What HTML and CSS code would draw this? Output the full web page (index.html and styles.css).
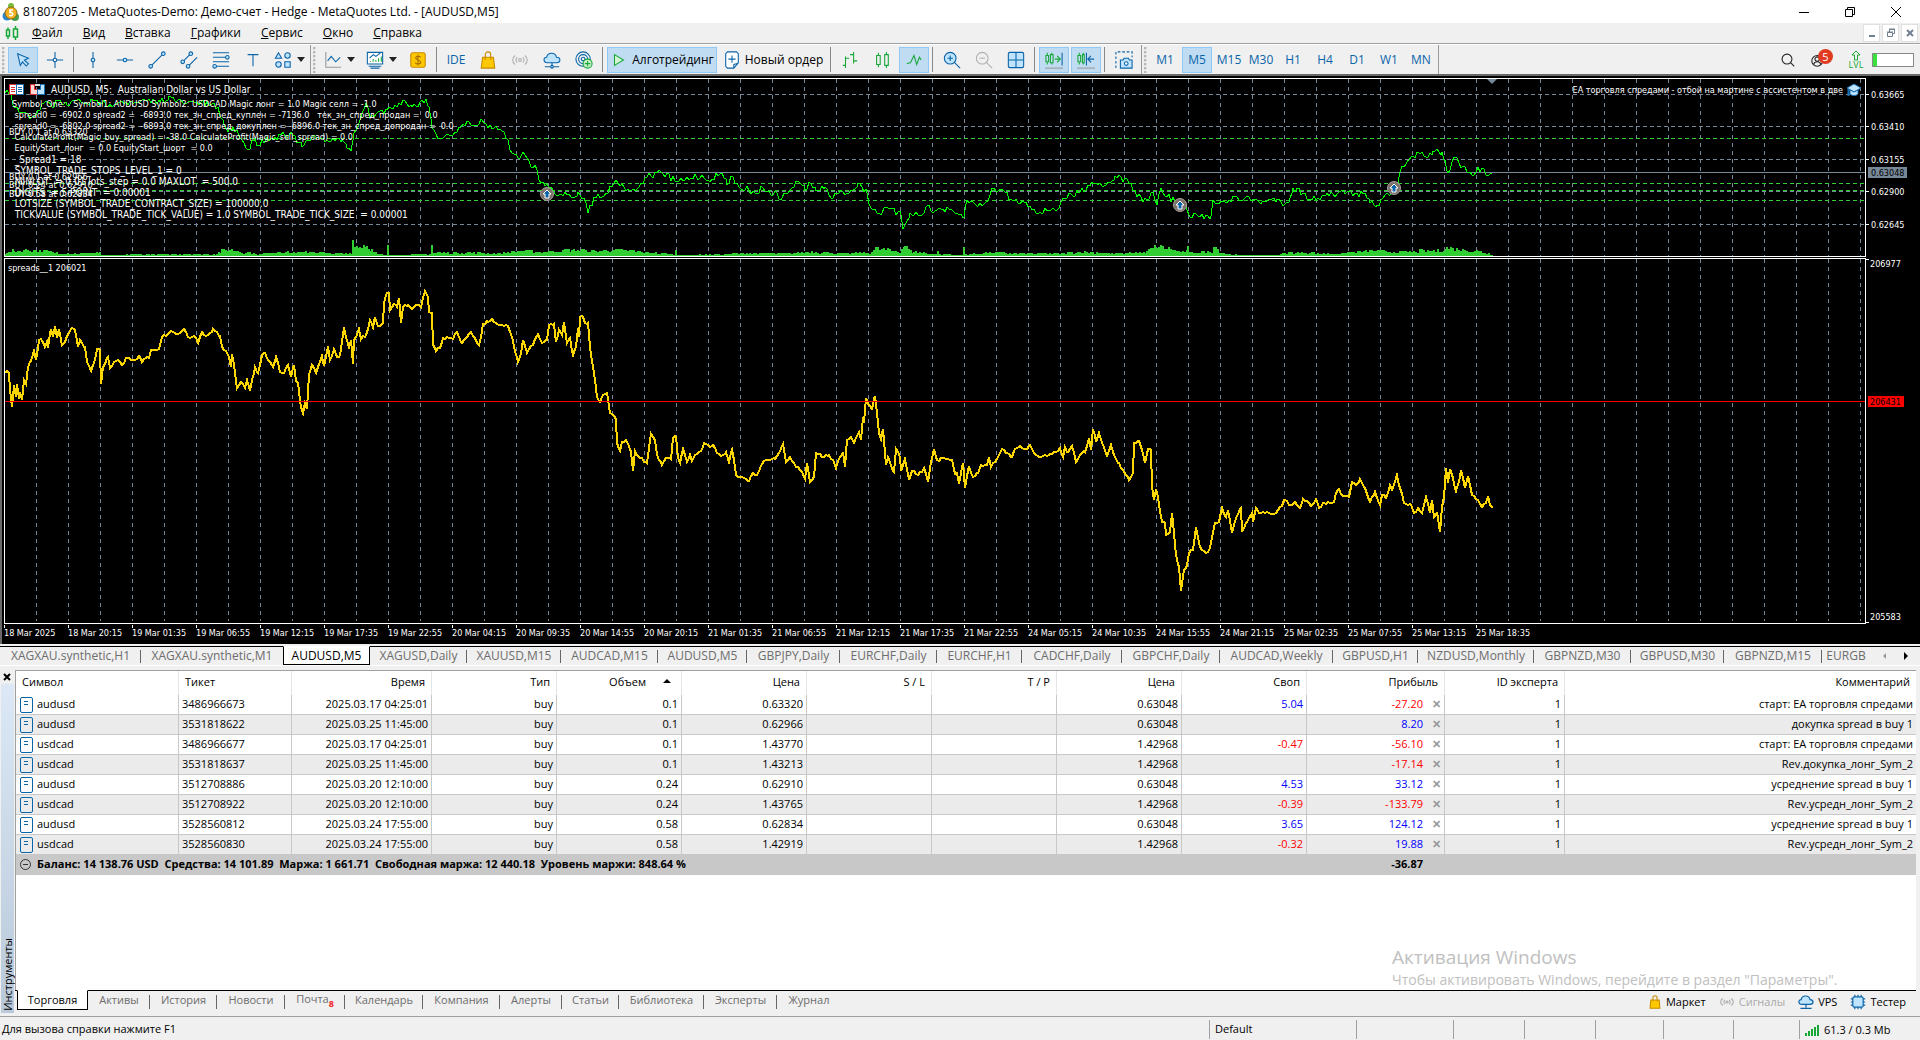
FILE: index.html
```html
<!DOCTYPE html>
<html lang="ru">
<head>
<meta charset="utf-8">
<title>81807205 - MetaQuotes-Demo</title>
<link rel="stylesheet" href="styles.css">
</head>
<body>
<header class="titlebar">
  <svg class="logo" width="18" height="20" viewBox="0 0 18 20"><path d="M9 1l3 4H6z" fill="#3a9a3a"/><circle cx="9" cy="4" r="3" fill="#7dbb3c"/><circle cx="5" cy="14" r="4.500" fill="#2d87c8"/><circle cx="13" cy="15" r="4" fill="#4aa04a"/><circle cx="9" cy="11" r="6" fill="#f2b01e" stroke="#8a6a1a"/><path d="M11 8H8v2.500c3-.8 4 3 .8 3.200L7 13.200" fill="none" stroke="#fff" stroke-width="1.600"/></svg>
  <h1>81807205 - MetaQuotes-Demo: Демо-счет - Hedge - MetaQuotes Ltd. - [AUDUSD,M5]</h1>
  <div class="winctl">
    <button aria-label="Свернуть"><svg width="12" height="12"><path d="M1 6.500h10" stroke="#000"/></svg></button>
    <button aria-label="Восстановить"><svg width="12" height="12" fill="none" stroke="#000"><path d="M1.500 3.500h7v7h-7zM3.500 3.500v-2h7v7h-2"/></svg></button>
    <button aria-label="Закрыть"><svg width="12" height="12"><path d="M1 1l10 10M11 1L1 11" stroke="#000"/></svg></button>
  </div>
</header>

<nav class="menubar">
  <svg width="16" height="16" viewBox="0 0 16 16" fill="none" stroke="#18a838" stroke-width="1.500"><path d="M1.500 5h3v6h-3zM3 2.500V5M3 11v3M8.500 4h4v8h-4zM10.500 1v3M10.500 12v3"/></svg>
  <button><u>Ф</u>айл</button><button><u>В</u>ид</button><button><u>В</u>ставка</button><button><u>Г</u>рафики</button><button><u>С</u>ервис</button><button><u>О</u>кно</button><button><u>С</u>правка</button>
  <div class="mdictl">
    <button aria-label="Свернуть окно"><svg width="12" height="12"><path d="M3 9h6" stroke="#708090" stroke-width="2"/></svg></button>
    <button aria-label="Восстановить окно"><svg width="12" height="12" fill="none" stroke="#708090"><path d="M2.500 5.500h5v4h-5zM2 5h6M4.500 5V2.500h5v4H8M4 2h6"/></svg></button>
    <button aria-label="Закрыть окно"><svg width="12" height="12"><path d="M3 3l6 6M9 3L3 9" stroke="#708090" stroke-width="2"/></svg></button>
  </div>
</nav>

<div class="toolbar">
  <div class="group">
    <i class="grip"></i>
    <button class="tb on" aria-label="Курсор"><svg viewBox="0 0 20 20"><path d="M4 3l12 5-4.500 2.200 4.500 4-2.500 2.500-4-4.500L7 16z" class="lb"/></svg></button>
    <button class="tb" aria-label="Перекрестие"><svg viewBox="0 0 20 20"><path d="M10 1v7M10 12v7M1 10h7M12 10h7"/><circle cx="10" cy="10" r="2"/></svg></button>
    <i class="sep"></i>
    <button class="tb" aria-label="Вертикальная линия"><svg viewBox="0 0 20 20"><path d="M10 1v7M10 12v7"/><circle cx="10" cy="10" r="2" class="lb"/></svg></button>
    <button class="tb" aria-label="Горизонтальная линия"><svg viewBox="0 0 20 20"><path d="M1 10h7M12 10h7"/><circle cx="10" cy="10" r="2" class="lb"/></svg></button>
    <button class="tb" aria-label="Трендовая линия"><svg viewBox="0 0 20 20"><path d="M4 16L16 4"/><circle cx="3" cy="17" r="2" class="lb"/><circle cx="17" cy="3" r="2" class="lb"/></svg></button>
    <button class="tb" aria-label="Канал"><svg viewBox="0 0 20 20"><path d="M4 11l8-8M9 17L19 7"/><circle cx="3" cy="12" r="2" class="lb"/><circle cx="12" cy="3" r="2" class="lb"/><circle cx="9" cy="17" r="2" class="lb"/></svg></button>
    <button class="tb" aria-label="Фибоначчи"><svg viewBox="0 0 20 20"><path d="M1 2h18M1 7h14M1 12h18M5 17h14"/><circle cx="17" cy="7" r="2" class="lb"/><circle cx="3" cy="17" r="2" class="lb"/></svg></button>
    <button class="tb" aria-label="Текст"><svg viewBox="0 0 20 20"><path d="M4 4h12M10 4v13"/></svg></button>
    <button class="tb drop" aria-label="Объекты"><svg viewBox="0 0 20 20"><path d="M5 2L1.500 8h7z" class="lb"/><circle cx="15" cy="5" r="3" class="lb"/><circle cx="5" cy="15" r="3" class="lb"/><path d="M12 12h6v6h-6z" class="lb"/></svg><b></b></button>
  </div>
  <div class="group">
    <i class="grip"></i>
    <button class="tb wide" aria-label="Тип графика"><svg viewBox="0 0 20 20"><path d="M2 1v17h17" stroke="#999"/><path d="M4 11l4-5 5 6 5-5"/></svg><b></b></button>
    <button class="tb wide" aria-label="Индикаторы"><svg viewBox="0 0 20 20"><path d="M1.500 1.500h17v13h-17z" class="w"/><path d="M3 17h14M5 19h10"/><path d="M4 8l4-4 3 2 5-4"/><path d="M5 12v-1M8 12V9M11 12v-2M14 12V8M17 12V6" class="g"/></svg><b></b></button>
    <button class="tb" aria-label="Торговля"><svg viewBox="0 0 20 20"><rect x="2" y="2" width="16" height="16" rx="2" fill="#fcc800" stroke="#c98a00"/><path d="M13 7c-1-2-6-1.500-5.500 1S13 10 13 12.500 8 15 7 13M10 4v12" stroke="#a86a00"/></svg></button>
    <i class="sep"></i>
    <button class="tb txt">IDE</button>
    <button class="tb" aria-label="Маркет"><svg viewBox="0 0 20 20"><path d="M4 7h12l1.500 12h-15z" fill="#fcc800" stroke="#c98a00"/><path d="M7 10V4c0-4 6-4 6 0v6" stroke="#c98a00"/></svg></button>
    <button class="tb" aria-label="Сигналы"><svg viewBox="0 0 20 20" class="gray"><circle cx="10" cy="10" r="1.500"/><path d="M7 7c-2 2-2 4 0 6M13 7c2 2 2 4 0 6M4.500 5c-3.500 3-3.500 7 0 10M15.500 5c3.500 3 3.500 7 0 10"/></svg></button>
    <button class="tb" aria-label="VPS"><svg viewBox="0 0 20 20"><path d="M5 13c-5 0-5-6-1-6 1-6 10-6 11 0 5 0 5 6 0 6z" class="lb"/><path d="M10 13v3M2 17.500h6M12 17.500h6"/><circle cx="10" cy="17.500" r="1.500" class="lb"/></svg></button>
    <button class="tb" aria-label="Сервисы"><svg viewBox="0 0 20 20"><circle cx="9" cy="9" r="8"/><circle cx="9" cy="9" r="5"/><circle cx="9" cy="9" r="2"/><circle cx="14" cy="14" r="5" fill="#c8f0c8" class="g"/><path d="M14 11v6M11 14h6" class="g"/></svg></button>
    <i class="sep"></i>
    <button class="tb on algo"><svg viewBox="0 0 20 20"><path d="M5 4l10 6-10 6z" class="g" fill="#d4f4d4"/></svg><span>Алготрейдинг</span></button>
    <button class="tb order"><svg viewBox="0 0 20 20"><path d="M5 1h10l2 2v10l-5 6H5l-2-2V3z" class="w"/><path d="M10 5v8M6 9h8M12 19v-4l4-1"/></svg><span>Новый ордер</span></button>
    <i class="sep"></i>
    <button class="tb" aria-label="Бары"><svg viewBox="0 0 20 20"><path d="M5 6v13M2 16h3M5 8h4M14 1v13M10 4h4M14 11h4" class="g"/></svg></button>
    <button class="tb" aria-label="Свечи"><svg viewBox="0 0 20 20"><path d="M4 5h4v10H4zM6 2v3M6 15v3M13 4h4v12h-4zM15 1v3M15 16v3" class="g"/></svg></button>
    <button class="tb on" aria-label="Линия"><svg viewBox="0 0 20 20"><path d="M2 14l4-1 4-8 3 10 3-8 2 3" class="g"/></svg></button>
    <i class="sep"></i>
    <button class="tb" aria-label="Приблизить"><svg viewBox="0 0 20 20"><path d="M12 12l7 7"/><circle cx="8" cy="8" r="6.500" class="lb"/><path d="M5 8h6M8 5v6"/></svg></button>
    <button class="tb" aria-label="Отдалить"><svg viewBox="0 0 20 20" class="gray"><path d="M12 12l7 7"/><circle cx="8" cy="8" r="6.500"/><path d="M5 8h6"/></svg></button>
    <button class="tb" aria-label="Мозаика"><svg viewBox="0 0 20 20"><rect x="1.500" y="1.500" width="17" height="17" rx="1.500" class="lb"/><path d="M10 2v16M2 10h16"/></svg></button>
    <i class="sep"></i>
    <button class="tb on" aria-label="Автопрокрутка"><svg viewBox="0 0 20 20"><path d="M1 5h3v7H1zM2.500 2v3M2.500 12v3M6 4h3v9H6zM7.500 2v2M7.500 13v2M11 9h5M13.500 5.500L17 9l-3.500 3.500" class="g"/><path d="M19 2v14"/><path d="M0 19h20" stroke="#999"/></svg></button>
    <button class="tb on" aria-label="Сдвиг графика"><svg viewBox="0 0 20 20"><path d="M1 5h3v7H1zM2.500 2v3M2.500 12v3M6 4h2v9H6zM7 2v2M7 13v2" class="g"/><path d="M10.500 2v14M19 9h-6M15.500 5.500L12 9l3.500 3.500"/><path d="M0 19h20" stroke="#999"/></svg></button>
    <i class="sep"></i>
    <button class="tb" aria-label="Снимок"><svg viewBox="0 0 20 20"><path d="M1 19V1h18v6" stroke-dasharray="3 2"/><path d="M6 10h3l1-2h5l1 2h3v9H6z" class="lb"/><circle cx="12.500" cy="14" r="2" class="w"/></svg></button>
  </div>
  <div class="group">
    <i class="grip"></i>
    <button class="tb txt">M1</button><button class="tb txt on">M5</button><button class="tb txt">M15</button><button class="tb txt">M30</button><button class="tb txt">H1</button><button class="tb txt">H4</button><button class="tb txt">D1</button><button class="tb txt">W1</button><button class="tb txt">MN</button>
  </div>
  <div class="tools-right">
    <button class="tb" aria-label="Поиск"><svg viewBox="0 0 20 20" class="k"><circle cx="10" cy="9" r="5.500"/><path d="M14 13l4 4"/></svg></button>
    <button class="tb user" aria-label="Профиль"><svg viewBox="0 0 20 20" class="k"><circle cx="8" cy="11" r="6"/><circle cx="8" cy="9" r="2.500"/><path d="M4 15c1-4 7-4 8 0"/></svg><em>5</em></button>
    <div class="lvl"><svg width="12" height="11" viewBox="0 0 12 11" fill="none" stroke="#18a838"><path d="M6 1L2 5h2.500v5h3V5H10z"/></svg>LVL</div>
    <div class="meter"><i></i></div>
  </div>
</div>

<main class="chart">
  <div class="pane price">
    <svg id="price" role="img" aria-label="AUDUSD, M5"></svg>
    <div class="symbol">
      <svg width="15" height="11"><path d="M.500.500h7v10h-7z" fill="#fff" stroke="#e03030"/><path d="M7.500.500h7v10h-7z" fill="#fff" stroke="#1a6fb0"/><path d="M2 3.500h4M2 5.500h4M2 7.500h4" stroke="#e03030"/><path d="M9 3.500h4M9 5.500h4M9 7.500h4" stroke="#1a6fb0"/></svg>
      <svg width="15" height="11"><path d="M.500.500h4v5h3v5h-7z" fill="#ffd8d8" stroke="#e03030"/><path d="M14.500.500h-4v5h-3v5h7z" fill="#bfe4ff" stroke="#1a6fb0"/><path d="M5 0h5v2H5z" fill="#ddd"/></svg>
      <span>AUDUSD, M5:  Australian Dollar vs US Dollar</span>
    </div>
    <div class="expert"><span>EA торговля спредами - отбой на мартине с ассистентом в две</span><svg width="14" height="14"><path d="M7 1l7 4-7 4-7-4z" fill="#bfe4ff" stroke="#1a6fb0"/><path d="M3 7v4c2 2 6 2 8 0V7L7 9z" fill="#bfe4ff" stroke="#1a6fb0"/><path d="M1.500 6v7" stroke="#1a6fb0" stroke-width="2"/></svg></div>
    <div class="comment">
      <pre>Symbol_One:   Symbol1: AUDUSD Symbol2: USDCAD Magic лонг = 1.0 Magic селл = -1.0
 spread0 = -6902.0 spread2 =  -6893.0 тек_зн_спред_куплен = -7136.0   тек_зн_спред_продан =  0.0
 spread0 = -6802.0 spread2 =  -6893.0 тек_зн_спред_докуплен = -6896.0 тек_зн_спред_допродан =  0.0
 CalculateProfit(Magic_buy_spread) = -38.0 CalculateProfit(Magic_sell_spread) = 0.0
 EquityStart_лонг  = 0.0 EquityStart_шорт  = 0.0</pre>
      <pre class="props"> _Spread1 = 18
 SYMBOL_TRADE_STOPS_LEVEL_1 = 0
 MINLOT  = 0.01 lots_step = 0.0 MAXLOT  = 500.0
 DIGITS  = 5 POINT  = 0.00001
 LOTSIZE (SYMBOL_TRADE_CONTRACT_SIZE) = 100000.0
 TICKVALUE (SYMBOL_TRADE_TICK_VALUE) = 1.0 SYMBOL_TRADE_TICK_SIZE  = 0.00001</pre>
    </div>
  </div>
  <svg class="axis" id="price-axis" aria-hidden="true"></svg>
  <div class="pane spread">
    <svg id="spread" role="img" aria-label="spreads__1"></svg>
    <div class="spread-name">spreads__1 206021</div>
  </div>
  <svg class="axis" id="spread-axis" aria-hidden="true"></svg>
  <div class="times">
    <span>18 Mar 2025</span><span>18 Mar 20:15</span><span>19 Mar 01:35</span><span>19 Mar 06:55</span><span>19 Mar 12:15</span><span>19 Mar 17:35</span><span>19 Mar 22:55</span><span>20 Mar 04:15</span><span>20 Mar 09:35</span><span>20 Mar 14:55</span><span>20 Mar 20:15</span><span>21 Mar 01:35</span><span>21 Mar 06:55</span><span>21 Mar 12:15</span><span>21 Mar 17:35</span><span>21 Mar 22:55</span><span>24 Mar 05:15</span><span>24 Mar 10:35</span><span>24 Mar 15:55</span><span>24 Mar 21:15</span><span>25 Mar 02:35</span><span>25 Mar 07:55</span><span>25 Mar 13:15</span><span>25 Mar 18:35</span>
  </div>
</main>

<div class="charttabs" role="tablist">
  <button role="tab">XAGXAU.synthetic,H1</button><button role="tab" class="nosep">XAGXAU.synthetic,M1</button><button role="tab" class="active" aria-selected="true">AUDUSD,M5</button><button role="tab">XAGUSD,Daily</button><button role="tab">XAUUSD,M15</button><button role="tab">AUDCAD,M15</button><button role="tab">AUDUSD,M5</button><button role="tab">GBPJPY,Daily</button><button role="tab">EURCHF,Daily</button><button role="tab">EURCHF,H1</button><button role="tab">CADCHF,Daily</button><button role="tab">GBPCHF,Daily</button><button role="tab">AUDCAD,Weekly</button><button role="tab">GBPUSD,H1</button><button role="tab">NZDUSD,Monthly</button><button role="tab">GBPNZD,M30</button><button role="tab">GBPUSD,M30</button><button role="tab">GBPNZD,M15</button><button role="tab" class="nosep cut">EURGB</button>
  <div class="scroll"><button aria-label="Назад"><svg width="6" height="8"><path d="M4 1v6L1 4z" fill="#999"/></svg></button><button aria-label="Вперед"><svg width="6" height="8"><path d="M1 0v8l4-4z" fill="#000"/></svg></button></div>
</div>

<section class="terminal">
  <aside class="side">
    <button aria-label="Закрыть панель"><svg width="8" height="8"><path d="M1 1l6 6M7 1L1 7" stroke="#000" stroke-width="2"/></svg></button>
    <div class="side-name"><span>Инструменты</span></div>
  </aside>
  <div class="sheet">
    <div class="watermark"><p>Активация Windows</p><small>Чтобы активировать Windows, перейдите в раздел "Параметры".</small></div>
    <table>
      <colgroup><col class="c-sym"><col class="c-tick"><col class="c-time"><col class="c-n"><col class="c-n"><col class="c-n"><col class="c-n"><col class="c-n"><col class="c-n"><col class="c-n"><col class="c-profit"><col class="c-id"><col></colgroup>
      <thead><tr><th>Символ</th><th>Тикет</th><th>Время</th><th>Тип</th><th class="vol">Объем<i></i></th><th>Цена</th><th>S / L</th><th>T / P</th><th>Цена</th><th>Своп</th><th>Прибыль</th><th>ID эксперта</th><th>Комментарий</th></tr></thead>
      <tbody>
        <tr><td>audusd</td><td>3486966673</td><td>2025.03.17 04:25:01</td><td>buy</td><td>0.1</td><td>0.63320</td><td></td><td></td><td>0.63048</td><td class="up">5.04</td><td class="down">-27.20<button>✕</button></td><td>1</td><td>старт: EA торговля спредами</td></tr>
        <tr><td>audusd</td><td>3531818622</td><td>2025.03.25 11:45:00</td><td>buy</td><td>0.1</td><td>0.62966</td><td></td><td></td><td>0.63048</td><td></td><td class="up">8.20<button>✕</button></td><td>1</td><td>докупка spread в buy 1</td></tr>
        <tr><td>usdcad</td><td>3486966677</td><td>2025.03.17 04:25:01</td><td>buy</td><td>0.1</td><td>1.43770</td><td></td><td></td><td>1.42968</td><td class="down">-0.47</td><td class="down">-56.10<button>✕</button></td><td>1</td><td>старт: EA торговля спредами</td></tr>
        <tr><td>usdcad</td><td>3531818637</td><td>2025.03.25 11:45:00</td><td>buy</td><td>0.1</td><td>1.43213</td><td></td><td></td><td>1.42968</td><td></td><td class="down">-17.14<button>✕</button></td><td>1</td><td>Rev.докупка_лонг_Sym_2</td></tr>
        <tr><td>audusd</td><td>3512708886</td><td>2025.03.20 12:10:00</td><td>buy</td><td>0.24</td><td>0.62910</td><td></td><td></td><td>0.63048</td><td class="up">4.53</td><td class="up">33.12<button>✕</button></td><td>1</td><td>усреднение spread в buy 1</td></tr>
        <tr><td>usdcad</td><td>3512708922</td><td>2025.03.20 12:10:00</td><td>buy</td><td>0.24</td><td>1.43765</td><td></td><td></td><td>1.42968</td><td class="down">-0.39</td><td class="down">-133.79<button>✕</button></td><td>1</td><td>Rev.усредн_лонг_Sym_2</td></tr>
        <tr><td>audusd</td><td>3528560812</td><td>2025.03.24 17:55:00</td><td>buy</td><td>0.58</td><td>0.62834</td><td></td><td></td><td>0.63048</td><td class="up">3.65</td><td class="up">124.12<button>✕</button></td><td>1</td><td>усреднение spread в buy 1</td></tr>
        <tr><td>usdcad</td><td>3528560830</td><td>2025.03.24 17:55:00</td><td>buy</td><td>0.58</td><td>1.42919</td><td></td><td></td><td>1.42968</td><td class="down">-0.32</td><td class="up">19.88<button>✕</button></td><td>1</td><td>Rev.усредн_лонг_Sym_2</td></tr>
      </tbody>
      <tfoot><tr><td colspan="10"><svg width="11" height="11" fill="none" stroke="#333"><circle cx="5.500" cy="5.500" r="5"/><path d="M3 5.500h5"/></svg>Баланс: 14 138.76 USD  Средства: 14 101.89  Маржа: 1 661.71  Свободная маржа: 12 440.18  Уровень маржи: 848.64 %</td><td class="total">-36.87</td><td colspan="2"></td></tr></tfoot>
    </table>
  </div>
  <div class="paneltabs">
    <div class="ptabs" role="tablist">
      <button role="tab" class="active" aria-selected="true">Торговля</button><button role="tab">Активы</button><button role="tab">История</button><button role="tab">Новости</button><button role="tab">Почта<sub>8</sub></button><button role="tab">Календарь</button><button role="tab">Компания</button><button role="tab">Алерты</button><button role="tab">Статьи</button><button role="tab">Библиотека</button><button role="tab">Эксперты</button><button role="tab" class="nosep">Журнал</button>
    </div>
    <div class="services">
      <button><svg width="14" height="14" viewBox="0 0 20 20"><path d="M4 7h12l1 12H3z" fill="#fcc800" stroke="#c98a00" stroke-width="1.500"/><path d="M7 9V4c0-4 6-4 6 0v5" fill="none" stroke="#c98a00" stroke-width="1.500"/></svg>Маркет</button>
      <button class="off"><svg width="16" height="14" viewBox="0 0 20 20" fill="none" stroke="#aaa" stroke-width="1.500"><circle cx="10" cy="10" r="1.500"/><path d="M7 7c-2 2-2 4 0 6M13 7c2 2 2 4 0 6M4 5c-4 3-4 7 0 10M16 5c4 3 4 7 0 10"/></svg>Сигналы</button>
      <button><svg width="16" height="16" viewBox="0 0 20 20" fill="#bfe4ff" stroke="#0a64a8" stroke-width="1.500"><path d="M5 13c-5 0-5-6-1-6 1-6 10-6 11 0 5 0 5 6 0 6zM10 13v4M3 18h14"/></svg>VPS</button>
      <button><svg width="16" height="16" viewBox="0 0 20 20" fill="#bfe4ff" stroke="#0a64a8" stroke-width="1.500"><path d="M6 1v18M10 1v18M14 1v18M1 6h18M1 10h18M1 14h18"/><rect x="3.500" y="3.500" width="13" height="13" rx="2"/></svg>Тестер</button>
    </div>
  </div>
</section>

<footer class="status">
  <span>Для вызова справки нажмите F1</span><span>Default</span><span></span><span></span><span></span><span></span><span></span><span></span>
  <span class="net"><svg width="14" height="12" stroke="#18a838" stroke-width="2"><path d="M1 12V9M4 12V7M7 12V5M10 12V3M13 12V1"/></svg>61.3 / 0.3 Mb</span>
</footer>
<script src="chart.js"></script>
</body>
</html>
```
FILE: styles.css
```css
* { box-sizing: border-box; }
body {
  margin: 0;
  min-height: 100vh;
  display: flex;
  flex-direction: column;
  background: #f0f0f0;
  color: #000;
  font: 11px/16px "Open Sans", "Noto Sans", sans-serif;
  overflow-x: hidden;
}
button { font: inherit; color: inherit; background: none; border: 0; padding: 0; margin: 0; white-space: nowrap; }
svg { display: block; flex: none; }

/* title and menu */
.titlebar { display: flex; align-items: center; height: 23px; background: #fff; padding-left: 2px; gap: 3px; }
.titlebar h1 { margin: 0; font-size: 12px; font-weight: 400; flex: 1; }
.winctl { display: flex; height: 20px; }
.winctl button { width: 46px; padding-right: 3px; display: grid; place-items: center; }
.menubar { display: flex; align-items: center; height: 21px; padding-left: 5px; border-bottom: 1px solid #a0a0a0; font-size: 12px; }
.menubar > svg { margin-right: 1px; }
.menubar > button { padding: 0 10px; }
.mdictl { margin-left: auto; display: flex; gap: 2px; padding-right: 2px; }
.mdictl button { width: 17px; height: 18px; background: #fff; border: 1px solid #e0e0e0; display: grid; place-items: center; }

/* toolbar */
.toolbar { display: flex; height: 30px; border-top: 1px solid #fff; background: #f0f0f0; }
.group { display: flex; align-items: center; gap: 2px; padding: 0 2px; border-right: 1px solid #999; }
.grip { width: 4px; height: 26px; background: radial-gradient(circle at 1px 1px, #b8b8b8 1px, transparent 2px) 0 0 / 4px 4px; }
.sep { width: 4px; height: 25px; background: linear-gradient(#888, #888) 1px 0 / 1px 100% no-repeat; }
.tb { width: 30px; height: 26px; display: flex; align-items: center; justify-content: center; border: 1px solid transparent; }
.tb svg { width: 18px; height: 18px; fill: none; stroke: #0a64a8; stroke-width: 1.2; }
.tb svg .lb { fill: #bfe4ff; }
.tb svg .w { fill: #fff; }
.tb svg .g { stroke: #18a838; }
.tb svg.gray { stroke: #b0b0b0; }
.tb svg.k { stroke: #222; }
.tb.on { background: #c0dcf3; border-color: #90c8f6; }
.tb b { border: 4px solid transparent; border-top: 5px solid #222; border-bottom: 0; margin-left: 5px; }
.tb.drop { width: 38px; }
.tb.wide { width: 40px; }
.tb.txt { color: #0a64a8; font-size: 12px; }
.tb.algo { width: 110px; gap: 4px; font-size: 12px; }
.tb.order { width: 108px; gap: 4px; font-size: 12px; }
.tools-right { margin-left: auto; display: flex; align-items: center; padding-right: 6px; }
.user { position: relative; width: 34px; }
.user em { position: absolute; right: 2px; top: 1px; width: 15px; height: 15px; border-radius: 8px; background: #e03a20; color: #fff; font: 11px/15px "Open Sans", sans-serif; text-align: center; }
.lvl { display: flex; flex-direction: column; align-items: center; width: 24px; margin: 0 4px 0 8px; color: #18a838; font-size: 9px; line-height: 8px; }
.meter { width: 42px; height: 14px; border: 1px solid #888; background: #fff; }
.meter i { display: block; width: 4px; height: 12px; background: #3ce03c; }

/* chart window */
.chart {
  display: grid;
  grid-template-columns: minmax(0, 1fr) 52px;
  grid-template-rows: 179px 366px 19px;
  row-gap: 1px;
  padding: 2px 2px 0 2px;
  border-left: 2px solid #696969;
  border-top: 2px solid #696969;
  background: #000;
  color: #fff;
  font: 9px/11px "DejaVu Sans Condensed", "DejaVu Sans", sans-serif;
}
.pane { position: relative; border: 1px solid #fff; overflow: hidden; }
.pane svg[role] { width: 100%; height: 100%; }
.axis { width: 100%; height: 100%; overflow: visible; }
.axis text, .pane svg text { font: 9px "DejaVu Sans Condensed", "DejaVu Sans", sans-serif; fill: #fff; }
.axis text.tag { fill: #000; }
.symbol { position: absolute; left: 4px; top: 5px; display: flex; align-items: center; gap: 6px; white-space: pre; font-size: 10px; }
.expert { position: absolute; right: 4px; top: 4px; display: flex; align-items: center; gap: 4px; }
.comment { position: absolute; left: 7px; top: 20px; }
.comment pre { margin: 0; font: inherit; }
.comment .props { font-size: 10px; }
.spread-name { position: absolute; left: 3px; top: 4px; }
.times { display: flex; overflow: hidden; }
.times span { flex: 0 0 64px; white-space: nowrap; padding-top: 3px; background: linear-gradient(#fff, #fff) 0 0 / 1px 3px no-repeat; }

/* chart tabs */
.charttabs {
  display: grid;
  grid-template-columns: 141px 142px 87px 97px 94px 97px 89px 93px 97px 85px 100px 98px 113px 85px 116px 97px 93px 98px 48px 1fr;
  height: 20px;
  margin-top: 2px;
  border-bottom: 1px solid #fff;
  font-size: 12px;
  color: #6d6d6d;
}
.charttabs > * { border-top: 1px solid #000; }
.charttabs > button { background: linear-gradient(#666, #666) 100% 3px / 1px 13px no-repeat; text-align: center; overflow: hidden; }
.charttabs > .nosep { background: none; }
.charttabs > .active { background: #fff; color: #000; border: 1px solid #000; border-top-color: #fff; height: 19px; }
.scroll { display: flex; justify-content: space-between; align-items: center; padding: 0 11px 0 12px; }

/* terminal */
.terminal { flex: 1; display: grid; grid-template-columns: 15px minmax(0, 1fr); grid-template-rows: minmax(300px, 1fr) 26px; padding-top: 4px; }
.side { grid-row: 1 / 3; display: flex; flex-direction: column; }
.side > button { height: 14px; width: 14px; display: grid; place-items: center; }
.side-name { flex: 1; width: 13px; margin-left: 1px; background: linear-gradient(#dce8f5, #b9c9d9); display: flex; align-items: flex-end; padding-bottom: 2px; margin-bottom: 3px; }
.side-name span { writing-mode: vertical-rl; transform: rotate(180deg); line-height: 13px; font-size: 11px; }
.sheet { position: relative; background: #fff; border-top: 1px solid #a0a0a0; border-left: 1px solid #a0a0a0; margin-right: 4px; }
table { width: 100%; border-spacing: 0; table-layout: fixed; }
.c-sym { width: 163px; } .c-tick { width: 113px; } .c-time { width: 140px; } .c-n { width: 125px; } .c-profit { width: 138px; } .c-id { width: 120px; }
th, td { padding: 0 3px 2px; text-align: right; font-weight: 400; white-space: nowrap; overflow: hidden; border-right: 1px solid #c8c8c8; }
th { height: 24px; padding: 0 6px 2px; border-color: #e5e5e5; }
td { height: 20px; border-bottom: 1px solid #c8c8c8; }
th:nth-child(-n+2), tbody td:nth-child(-n+2) { text-align: left; }
th:last-child, td:last-child { border-right: 0; }
tbody tr:nth-child(even) { background: #ebebeb; }
tbody td:first-child {
  padding-left: 21px;
  background:
    linear-gradient(#0a64a8, #0a64a8) 8px 6px / 4px 1px no-repeat,
    linear-gradient(#0a64a8, #0a64a8) 8px 9px / 4px 1px no-repeat;
  position: relative;
}
tbody td:first-child::before { content: ""; position: absolute; left: 4px; top: 2px; width: 11px; height: 14px; border: 1px solid #0a64a8; border-radius: 2px; }
.vol { padding-right: 10px; }
.vol i { display: inline-block; border: 4px solid transparent; border-bottom: 4px solid #000; border-top: 0; margin: 0 0 3px 17px; }
.up { color: #0000ff; }
.down { color: #ff0000; }
td button { width: 18px; color: #999; font-weight: 700; text-align: right; }
tfoot td { background: #c8c8c8; border-color: #c8c8c8; font-weight: 700; white-space: pre; }
tfoot td:first-child { text-align: left; }
tfoot td svg { display: inline-block; vertical-align: -2px; margin: 0 6px 0 1px; }
tfoot .total { padding-right: 21px; }
.watermark { position: absolute; left: 1376px; bottom: 1px; color: #c0c0c0; white-space: nowrap; }
.watermark p { margin: 0; font-size: 19px; line-height: 26px; }
.watermark small { display: block; font-size: 14px; line-height: 19px; }

.paneltabs { display: flex; justify-content: space-between; border-top: 1px solid #000; margin-right: 4px; }
.ptabs { display: grid; grid-template-columns: 71px 62px 67px 68px 60px 78px 77px 62px 57px 85px 73px 64px; height: 20px; padding-left: 2px; color: #6d6d6d; }
.ptabs button { background: linear-gradient(#666, #666) 100% 4px / 1px 14px no-repeat; padding-bottom: 4px; }
.ptabs .nosep { background: none; }
.ptabs .active { background: #fff; color: #000; border: 1px solid #000; border-top-color: #fff; margin-top: -1px; height: 20px; padding-bottom: 1px; }
.ptabs sub { color: #f02020; font-weight: 700; font-size: 9px; line-height: 8px; vertical-align: -4px; }
.services { display: flex; gap: 13px; padding: 0 10px 3px 0; align-items: center; }
.services button { display: flex; align-items: center; gap: 4px; }
.services .off { color: #aaa; }

.status {
  display: grid;
  grid-template-columns: minmax(0, 1fr) 147px 97px 71px 71px 68px 70px 66px 121px;
  height: 24px;
  border-top: 1px solid #a0a0a0;
  line-height: 22px;
  padding-left: 2px;
}
.status span { margin-top: 3px; padding-left: 5px; line-height: 18px; height: 19px; border-left: 1px solid #a0a0a0; }
.status span:first-child { border: 0; padding: 0; }
.status .net { display: flex; align-items: center; gap: 5px; }
```
FILE: chart.js
```js
// Series are "x,y" pairs in window pixels; drawn inside panes whose origin is given.
const PRICE = "5,93 11,94 13,105 20,112 31,118 38,110 47,102 52,107 58,100 67,105 77,100 87,103 100,102 110,104 122,101 133,104 147,101 160,102 169,96 175,101 187,103 197,102 210,105 218,107 221,118 228,132 233,127 238,133 248,150 255,138 258,145 267,137 273,140 283,132 293,135 302,147 308,140 317,137 325,142 333,138 342,140 347,148 351,151 354,133 360,120 366,103 370,118 378,112 387,110 395,105 405,101 412,107 426,99 429,107 432,128 439,138 447,134 453,135 461,127 469,122 475,125 482,120 488,128 496,126 504,132 508,140 512,153 518,158 523,152 531,167 535,165 541,183 549,188 559,195 565,192 571,197 578,192 584,198 588,213 594,197 606,193 612,187 616,180 624,187 635,191 645,178 661,172 677,182 696,176 712,179 722,173 727,185 731,176 735,183 755,193 763,188 782,198 798,181 805,190 809,182 816,191 825,187 831,198 839,193 853,190 858,183 867,193 871,208 882,213 888,208 901,215 903,229 910,213 920,215 927,206 933,213 939,208 955,213 964,217 967,200 978,206 986,202 994,188 1003,190 1012,200 1024,202 1041,213 1053,208 1059,208 1063,198 1078,193 1092,182 1106,185 1115,176 1131,183 1137,197 1147,200 1153,192 1157,205 1161,188 1167,197 1180,202 1187,210 1190,217 1211,216 1213,200 1227,203 1237,197 1253,200 1262,202 1277,199 1285,204 1290,198 1293,188 1303,193 1312,200 1327,193 1335,197 1343,190 1353,196 1363,194 1370,203 1377,205 1383,198 1390,195 1398,183 1400,172 1409,160 1418,152 1426,157 1433,151 1442,152 1445,160 1448,173 1455,157 1461,168 1468,172 1476,172 1482,168 1486,175 1492,173";
const SPREAD = "5,373 7,371 9,373 10,390 12,407 13,397 14,385 16,397 17,384 19,399 20,392 22,400 24,380 26,384 28,367 31,361 34,351 36,360 39,340 42,341 45,347 47,342 48,348 51,329 53,337 55,326 57,338 59,329 62,345 65,342 69,333 72,328 75,330 78,347 80,340 85,347 87,362 91,371 94,363 97,349 100,350 101,384 103,367 108,357 110,368 114,362 118,360 122,365 127,358 133,360 139,356 142,362 147,357 149,358 151,350 159,349 162,337 167,335 171,331 176,334 184,329 188,337 194,336 198,343 202,332 206,336 210,333 213,329 220,336 222,347 226,351 229,357 231,367 232,354 234,365 237,388 241,382 245,388 247,380 250,391 255,367 258,373 262,355 265,353 268,360 273,367 276,357 280,372 284,373 288,365 291,377 294,365 296,381 298,383 301,407 303,413 305,403 307,409 309,375 312,365 316,373 318,367 322,356 324,366 328,346 330,360 334,349 337,357 340,355 344,327 346,337 349,347 351,340 353,364 354,340 359,329 361,339 366,335 370,320 373,327 375,317 378,326 383,323 384,303 387,293 389,293 390,310 394,304 397,307 399,298 401,323 403,307 408,305 412,309 417,305 421,307 425,291 428,297 429,312 432,313 433,345 436,351 440,348 443,338 449,338 453,339 457,332 462,343 467,337 471,332 476,341 479,345 481,337 483,324 488,322 492,319 497,324 502,325 508,326 512,337 515,352 518,362 521,353 523,340 527,353 533,345 538,334 542,343 547,340 549,325 554,324 556,342 559,330 562,335 564,322 567,343 570,338 573,355 576,347 578,328 579,337 580,317 583,317 585,323 588,323 590,347 593,367 595,380 597,397 600,402 603,395 607,393 610,413 613,415 616,420 617,443 620,451 622,442 626,440 631,452 633,471 635,451 640,458 647,463 649,448 651,434 655,440 657,455 662,465 666,458 671,459 673,438 676,437 678,458 680,463 683,449 687,462 690,455 692,461 695,455 701,451 704,443 710,447 713,445 717,453 723,455 726,452 729,462 732,450 734,460 736,475 742,477 749,481 753,473 757,475 762,464 768,460 775,459 780,451 783,444 786,462 790,457 796,467 802,472 805,479 807,463 810,482 814,477 816,453 822,457 829,455 833,460 836,468 840,457 843,452 845,467 847,440 851,437 854,443 859,432 861,440 863,417 864,423 866,398 869,405 872,410 875,396 877,413 879,433 881,439 883,429 886,465 888,457 891,466 894,472 896,449 900,457 901,471 905,459 909,480 912,471 918,475 924,468 928,482 931,462 934,449 937,460 944,458 952,460 955,474 957,473 959,484 963,463 965,488 969,466 973,477 978,473 981,465 987,465 989,457 991,467 998,457 1002,449 1007,453 1012,457 1015,449 1020,446 1025,449 1030,445 1034,453 1039,457 1045,455 1050,454 1056,452 1060,448 1063,457 1065,447 1068,452 1072,446 1076,462 1080,455 1085,452 1089,438 1091,450 1093,429 1096,442 1099,433 1104,447 1107,456 1111,445 1114,455 1119,463 1124,472 1129,480 1133,473 1134,443 1139,441 1142,450 1145,463 1148,449 1151,450 1152,487 1154,500 1156,489 1158,497 1162,522 1165,523 1166,535 1170,532 1172,513 1174,533 1176,555 1179,567 1181,591 1184,570 1187,565 1189,553 1193,550 1196,527 1200,547 1206,553 1210,548 1213,532 1215,523 1219,522 1222,508 1226,517 1228,510 1232,533 1236,518 1241,508 1242,532 1247,522 1252,513 1253,522 1256,508 1259,513 1267,512 1274,514 1280,507 1285,500 1290,505 1295,502 1300,508 1303,499 1312,505 1316,499 1319,508 1324,503 1334,502 1336,493 1339,489 1343,496 1349,497 1352,482 1357,484 1360,479 1365,488 1370,502 1375,492 1380,505 1382,495 1386,498 1390,485 1392,490 1397,475 1400,488 1404,503 1411,505 1414,513 1418,508 1422,513 1426,497 1430,513 1432,500 1434,517 1437,512 1440,532 1442,507 1444,497 1446,468 1448,483 1450,469 1453,478 1456,491 1459,482 1461,470 1465,488 1468,476 1472,495 1478,500 1482,507 1486,503 1488,496 1490,505 1493,508";
const VOLUME = "5,3 14,6 30,7 45,6 60,3 75,3 100,4 101,1 150,2 200,2 215,2 220,5 228,8 240,5 260,2 280,5 300,4 310,5 330,3 352,3 353,18 358,10 365,13 372,7 378,2 386,1 388,10 390,1 430,2 432,13 434,4 470,4 500,3 520,6 545,5 570,7 600,6 616,7 640,5 674,2 676,6 678,1 715,2 750,3 790,3 810,5 840,3 870,4 876,9 900,5 905,12 912,5 936,2 938,7 940,2 962,1 964,9 966,2 988,4 1024,3 1060,3 1085,5 1110,3 1145,4 1157,12 1175,7 1185,4 1188,10 1190,4 1212,5 1214,14 1220,5 1230,2 1245,1 1275,1 1290,4 1340,3 1370,6 1400,5 1440,6 1447,9 1465,7 1475,6 1492,2";

const parse = s => s.split(" ").map(p => p.split(",").map(Number));
let seed = 7;
const rnd = () => (seed = (seed * 16807) % 2147483647) / 2147483647;

// Fill in the bars between key points, one every `step` pixels.
function bars(points, step, noise) {
  const out = [];
  for (let i = 0; i < points.length - 1; i++) {
    const [x0, y0] = points[i], [x1, y1] = points[i + 1];
    out.push([x0, y0]);
    for (let x = x0 + step; x < x1; x += step) {
      const y = y0 + (y1 - y0) * (x - x0) / (x1 - x0);
      out.push([x, Math.round(y + (rnd() - 0.5) * noise)]);
    }
  }
  out.push(points[points.length - 1]);
  return out;
}
const path = pts => "M" + pts.map(p => p.join(" ")).join("L");
const crisp = 'shape-rendering="crispEdges"';
const grid = "#778899";

function verticals(width, height) {
  let s = "";
  for (let x = 31; x < width; x += 32) s += `<path d="M${x + 0.5} 0V${height}"/>`;
  return `<g stroke="${grid}" stroke-dasharray="4 4" ${crisp}>${s}</g>`;
}
const hline = (y, color, dash) =>
  `<line x1="0" x2="100%" y1="${y + 0.5}" y2="${y + 0.5}" stroke="${color}" stroke-dasharray="${dash}" ${crisp}/>`;

function drawPrice() {
  const el = document.getElementById("price");
  const top = 79, left = 5;
  let s = verticals(el.clientWidth, 177);
  for (const y of [94, 126, 159, 191, 224]) s += hline(y - top, grid, "4 3");
  for (const y of [138, 183, 190, 200]) s += hline(y - top, "#32cd32", "4 3");
  s += hline(172 - top, grid, "none");
  let vol = "";
  const env = parse(VOLUME);
  for (const [x, h] of bars(env, 2, 0)) vol += `M${x} 256v${-Math.max(1, Math.round(h * (0.6 + rnd() * 0.5)))}`;
  s += `<g transform="translate(${-left} ${-top})">`;
  s += `<path d="${vol}" stroke="#32cd32" stroke-width="2" ${crisp}/>`;
  s += `<path d="${path(bars(parse(PRICE), 2, 7))}" fill="none" stroke="#00ff00" ${crisp}/>`;
  for (const [x, y] of [[547, 194], [1180, 205], [1394, 188]])
    s += `<circle cx="${x}" cy="${y}" r="6.500" fill="#7d716b" stroke="#a8a09c"/><path d="M${x} ${y - 4}l4 4h-2v4h-4v-4h-2z" fill="#0a64a8" stroke="#fff"/>`;
  s += `<path d="M1487 79h10l-5 5z" fill="${grid}"/>`;
  [["0.1 at 0.63320", 135], ["0.1 at 0.62966", 180], ["0.24 at 0.62910", 188], ["0.58 at 0.62834", 197]]
    .forEach(([t, y]) => { s += `<text x="9" y="${y}">BUY ${t}</text>`; });
  el.innerHTML = s + "</g>";
}

function drawSpread() {
  const el = document.getElementById("spread");
  el.innerHTML = verticals(el.clientWidth, 362) +
    `<g transform="translate(-5 -259)"><path d="${path(bars(parse(SPREAD), 2, 3))}" fill="none" stroke="#ffd700" stroke-width="2" ${crisp}/></g>` +
    hline(401 - 259, "#ff0000", "none");
}

function drawAxes() {
  let s = "";
  for (const [t, y] of [["0.63665", 16], ["0.63410", 48], ["0.63155", 81], ["0.62900", 113], ["0.62645", 146]])
    s += `<path d="M0 ${y + 0.5}h3" stroke="#fff"/><text x="5" y="${y + 4}">${t}</text>`;
  s += `<rect x="2" y="89" width="39" height="11" fill="${grid}"/><text class="tag" x="5" y="98">0.63048</text>`;
  document.getElementById("price-axis").innerHTML = s;
  document.getElementById("spread-axis").innerHTML =
    `<path d="M0 1.500h3M0 364.500h3" stroke="#fff"/><text x="4" y="9">206977</text><text x="4" y="362">205583</text>` +
    `<rect x="2" y="138" width="36" height="11" fill="#ff0000"/><text class="tag" x="4" y="147">206431</text>`;
}

drawPrice();
drawSpread();
drawAxes();
window.addEventListener("resize", () => { seed = 7; drawPrice(); drawSpread(); });
```
